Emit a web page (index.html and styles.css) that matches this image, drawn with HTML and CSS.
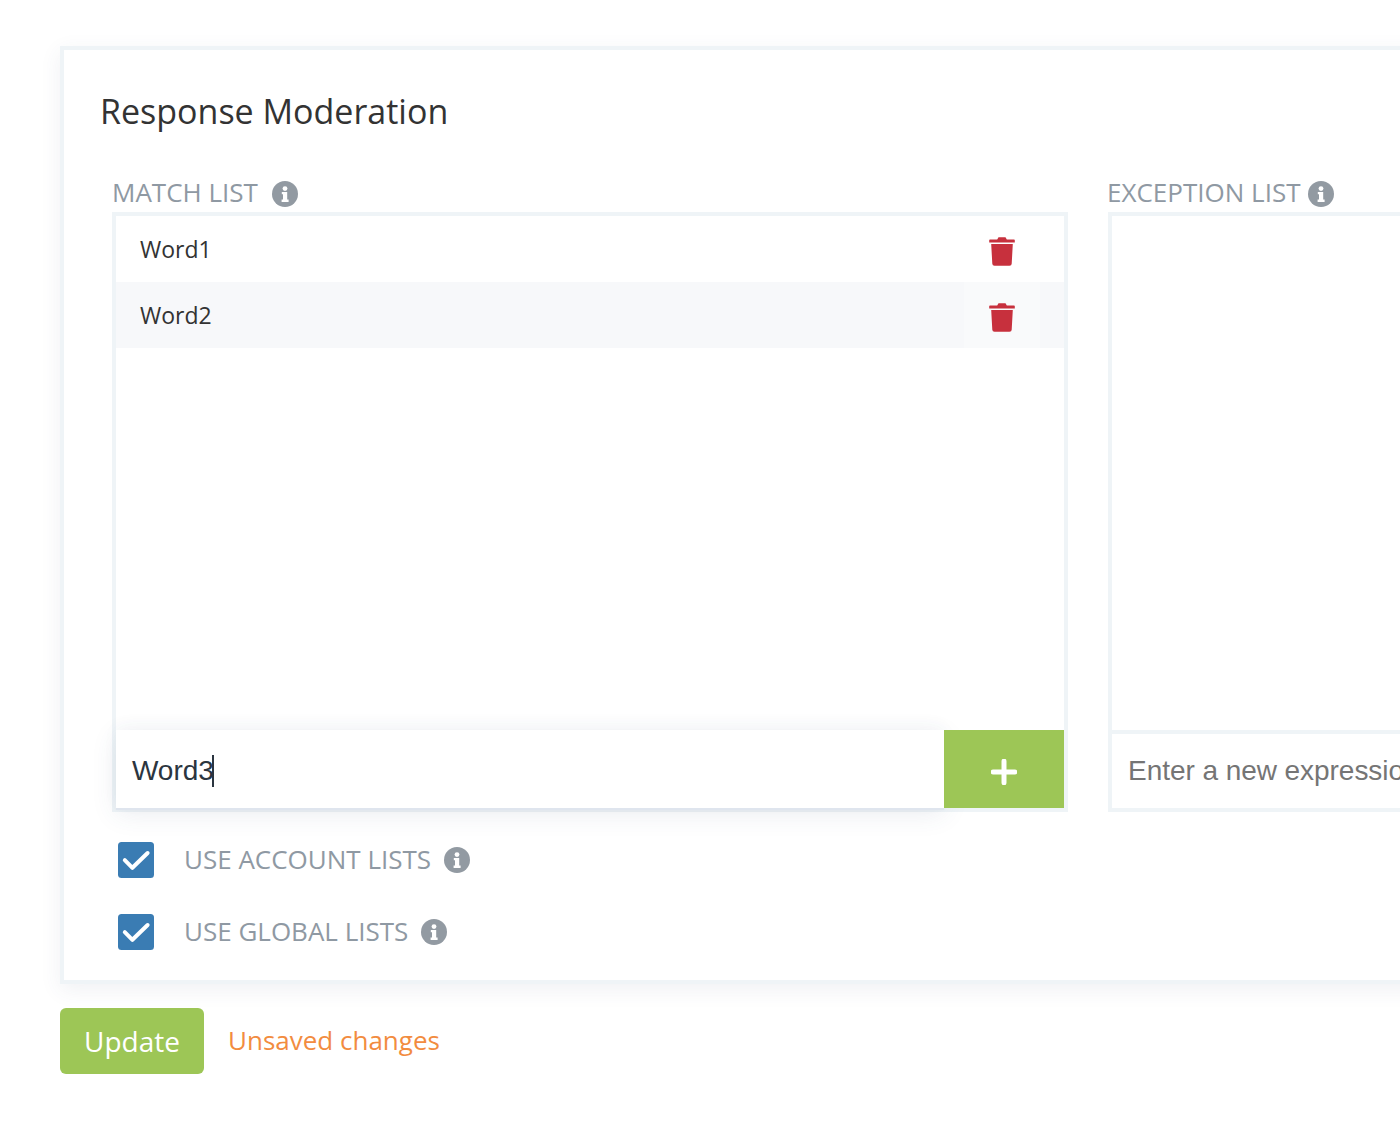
FILE: index.html
```html
<!DOCTYPE html>
<html lang="en">
<head>
<meta charset="utf-8">
<title>Response Moderation</title>
<link rel="stylesheet" href="styles.css">
</head>
<body>
<svg class="defs" width="0" height="0" aria-hidden="true">
  <symbol id="info" viewBox="0 0 26 26">
    <circle cx="13" cy="13" r="13" fill="#929aa2"/>
    <circle cx="13" cy="7.6" r="2.4" fill="#fff"/>
    <path d="M9.800 11h5.400v7.600h1.400V21H9.600v-2.400H11V13.300H9.800z" fill="#fff"/>
  </symbol>
  <symbol id="trash" viewBox="0 0 26 29">
    <path d="M9.500 0.300h7l1.300 2.200H25a.8.800 0 0 1 .8.800v2.200H.2V3.300a.8.800 0 0 1 .8-.8h7.200z" fill="#c7303d"/>
    <path d="M2.200 7h21.600l-1.100 19.700a2.200 2.200 0 0 1-2.200 2.100H5.500a2.200 2.200 0 0 1-2.200-2.100z" fill="#c7303d"/>
  </symbol>
  <symbol id="check" viewBox="0 0 36 36">
    <rect width="36" height="36" rx="3.500" fill="#3a7cb3"/>
    <path d="M6.800 18.200l7.600 7.600L29.600 11" fill="none" stroke="#fff" stroke-width="4" stroke-linecap="round" stroke-linejoin="round"/>
  </symbol>
</svg>

<main class="page">
  <section class="card">
    <h1 class="title">Response Moderation</h1>
    <div class="lists">
      <div class="column">
        <div class="list-label">MATCH LIST <svg class="info info-label info-match"><use href="#info"/></svg></div>
        <div class="list-box">
          <ul class="items">
            <li class="item"><span>Word1</span><span class="del"><svg class="trash"><use href="#trash"/></svg></span></li>
            <li class="item item-hover"><span>Word2</span><span class="del del-hover"><svg class="trash"><use href="#trash"/></svg></span></li>
          </ul>
          <div class="add-row">
            <div class="field field-active">Word3<span class="caret"></span></div>
            <button class="add-btn" type="button" aria-label="Add">
              <svg class="plus" viewBox="0 0 24 24"><path d="M12 2v20M2 12h20" fill="none" stroke="#fff" stroke-width="4.600" stroke-linecap="round"/></svg>
            </button>
          </div>
        </div>
      </div>
      <div class="column">
        <div class="list-label list-label-except">EXCEPTION LIST <svg class="info info-label info-except"><use href="#info"/></svg></div>
        <div class="list-box">
          <ul class="items"></ul>
          <div class="add-row add-row-idle">
            <input class="field field-input" type="text" placeholder="Enter a new expression">
          </div>
        </div>
      </div>
    </div>
    <div class="options">
      <label class="option"><svg class="check"><use href="#check"/></svg><span class="option-text">USE ACCOUNT LISTS</span><svg class="info"><use href="#info"/></svg></label>
      <label class="option"><svg class="check"><use href="#check"/></svg><span class="option-text">USE GLOBAL LISTS</span><svg class="info"><use href="#info"/></svg></label>
    </div>
  </section>
  <div class="actions">
    <button class="update" type="button">Update</button>
    <span class="unsaved">Unsaved changes</span>
  </div>
</main>
</body>
</html>
```
FILE: styles.css
```css
* { box-sizing: border-box; }
html, body { margin: 0; height: 100%; overflow: hidden; background: #fff; }
body { font-family: "Open Sans", "Liberation Sans", sans-serif; color: #333; }
.defs { position: absolute; }
.page { width: 2100px; padding: 46px 0 0 60px; }

.card {
  height: 938px;
  border: 4px solid #eff4f7;
  background: #fff;
  padding: 39px 0 0 48px;
  box-shadow: 0 6px 20px rgba(60, 80, 120, .08);
}
.title {
  margin: 0 0 0 -12px;
  font-size: 34px;
  line-height: 44px;
  font-weight: 400;
  color: #333;
}

.lists { display: flex; gap: 40px; margin-top: 41px; }
.column { width: 956px; flex: none; }
.list-label {
  display: flex;
  align-items: center;
  height: 38px;
  padding-bottom: 2px;
  font-size: 26px;
  color: #8f99a3;
  white-space: pre;
}
.list-label-except { margin-left: -1px; }
.list-box {
  height: 600px;
  border: 4px solid #eff4f7;
  display: flex;
  flex-direction: column;
}
.items { flex: 1; margin: 0; padding: 0; list-style: none; }
.item {
  display: flex;
  justify-content: space-between;
  align-items: center;
  height: 66px;
  padding: 0 24px;
  font-size: 23px;
  color: #333;
}
.item-hover { background: #f7f8fa; }
.del {
  width: 76px;
  height: 66px;
  padding-top: 4px;
  display: flex;
  align-items: center;
  justify-content: center;
}
.del-hover { background: #f9fafb; }
.trash { width: 26px; height: 29px; }

.add-row { display: flex; height: 78px; flex: none; }
.add-row-idle { border-top: 4px solid #eff4f7; }
.field {
  flex: 1;
  min-width: 0;
  border: 0;
  outline: 0;
  background: #fff;
  font-family: "Liberation Sans", Arial, sans-serif;
  font-size: 28px;
  letter-spacing: -.05px;
  padding: 0 16px;
  color: #2b3540;
}
.field-active {
  display: flex;
  align-items: center;
  padding-top: 4px;
  box-shadow: 0 2px 0 #dfe5ee, 0 6px 24px rgba(60, 80, 120, .1), 0 -4px 16px rgba(60, 80, 120, .03);
}
.field-input::placeholder { color: #757575; opacity: 1; }
.caret {
  display: inline-block;
  width: 2px;
  height: 32px;
  margin-left: -2px;
  background: #2b3540;
}
.add-btn {
  width: 120px;
  flex: none;
  border: 0;
  padding: 0;
  background: #9dc656;
  display: flex;
  align-items: center;
  justify-content: center;
}
.plus { width: 26px; height: 26px; margin-top: 6px; display: block; }

.info { width: 26px; height: 26px; flex: none; }
.info-label { margin-top: 4px; }
.info-match { margin-left: 7px; }
.info-except { margin-left: 1px; }

.options { margin-top: 30px; margin-left: 6px; display: flex; flex-direction: column; gap: 36px; }
.option { display: flex; align-items: center; height: 36px; }
.check { width: 36px; height: 36px; flex: none; }
.option-text {
  margin: -3px 13px 0 30px;
  font-size: 26px;
  color: #8f99a3;
}

.actions { display: flex; align-items: center; margin-top: 24px; }
.update {
  width: 144px;
  height: 66px;
  border: 0;
  border-radius: 6px;
  background: #9dc656;
  color: #fff;
  font-family: inherit;
  font-size: 28px;
  padding: 0;
}
.unsaved { margin-left: 24px; margin-top: -2px; font-size: 26px; color: #f28c3f; }
```
